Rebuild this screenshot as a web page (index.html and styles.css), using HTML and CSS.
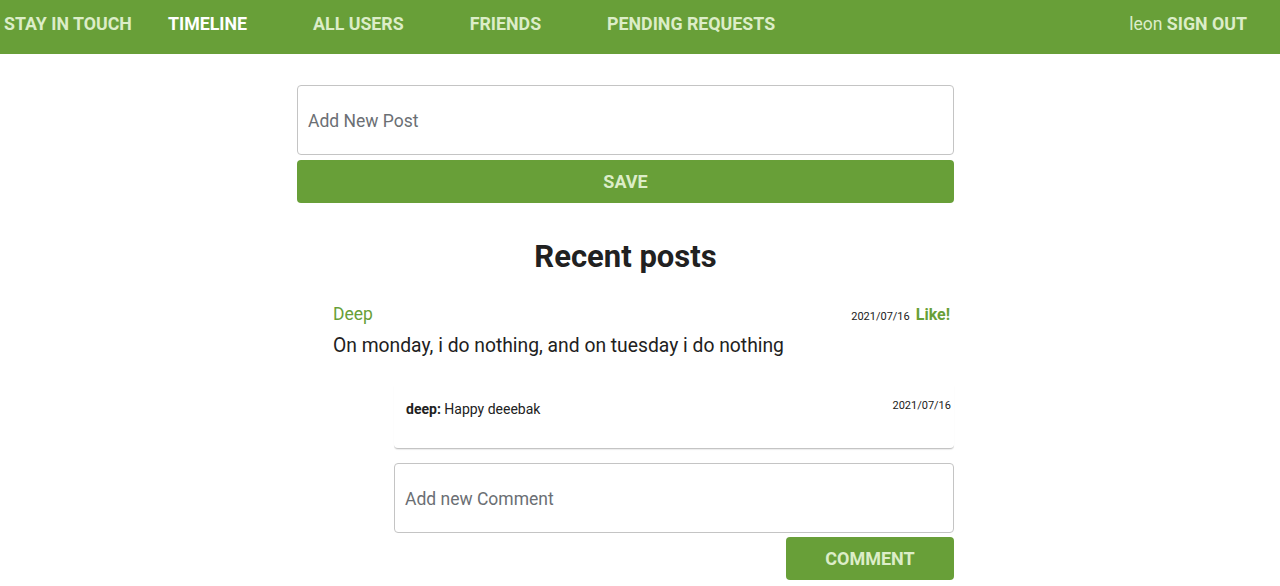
FILE: index.html
```html
<!DOCTYPE html>
<html>
<head>
<meta charset="utf-8">
<link rel="stylesheet" href="styles.css">
</head>
<body>
<nav class="nav">
  <a class="brand">STAY IN TOUCH</a>
  <a class="link active">TIMELINE</a>
  <a class="link">ALL USERS</a>
  <a class="link">FRIENDS</a>
  <a class="link">PENDING REQUESTS</a>
  <div class="user"><span class="uname">leon</span> <a class="signout">SIGN OUT</a></div>
</nav>
<main class="main">
  <div class="field post-field">Add New Post</div>
  <button class="btn save">SAVE</button>
  <h1 class="title">Recent posts</h1>
  <section class="post">
    <div class="post-head">
      <span class="author">Deep</span>
      <span class="meta"><span class="date">2021/07/16</span><a class="like">Like!</a></span>
    </div>
    <p class="body">On monday, i do nothing, and on tuesday i do nothing</p>
  </section>
  <section class="comments">
    <div class="comment">
      <span class="ctext"><b>deep:</b> Happy deeebak</span>
      <span class="cdate">2021/07/16</span>
    </div>
    <div class="field comment-field">Add new Comment</div>
    <div class="actions"><button class="btn cbtn">COMMENT</button></div>
  </section>
</main>
</body>
</html>
```
FILE: styles.css
```css
* { box-sizing: border-box; }
body {
  margin: 0;
  font-family: Roboto, "Liberation Sans", sans-serif;
  color: #212121;
  background: #fff;
}
.nav {
  height: 54px;
  background: #689f38;
  display: flex;
  align-items: flex-start;
  padding: 13px 0 0 4px;
  font-weight: 700;
  font-size: 17.8px;
  line-height: 22px;
  color: #dcedc8;
}
.brand { margin-right: 36px; }
.link { margin-right: 66px; }
.link.active { color: #fff; }
.user { margin-left: auto; margin-right: 33px; }
.uname { font-weight: 400; font-size: 17.5px; }
.main {
  width: 657px;
  margin: 31px 0 0 297px;
  display: flex;
  flex-direction: column;
}
.field {
  height: 70px;
  border: 1px solid #c4c4c4;
  border-radius: 4px;
  display: flex;
  align-items: center;
  padding: 2px 0 0 10px;
  font-size: 17.5px;
  color: #6b6f74;
}
.btn {
  border: none;
  background: #689f38;
  color: #dcedc8;
  font-family: inherit;
  font-weight: 700;
  font-size: 18px;
  height: 43px;
  border-radius: 4px;
}
.save { margin-top: 5px; }
.title {
  margin: 35px 0 0;
  text-align: center;
  font-size: 31px;
  line-height: 38px;
  font-weight: 700;
}
.post { padding: 0 4px 0 36px; margin-top: 26px; }
.post-head {
  display: flex;
  justify-content: space-between;
  align-items: baseline;
}
.author { color: #689f38; font-size: 17.5px; line-height: 24px; }
.date { font-size: 11px; margin-right: 6px; }
.like { color: #689f38; font-weight: 700; font-size: 16px; }
.body { margin: 8px 0 0; font-size: 19.3px; line-height: 24px; }
.comments { margin-left: 97px; margin-top: 27px; }
.comment {
  display: flex;
  justify-content: space-between;
  align-items: flex-start;
  padding: 12px 3px 0 12px;
  height: 64px;
  border-bottom: 1px solid #c4c4c4;
  border-radius: 0 0 4px 4px;
  box-shadow: 0 1px 1px rgba(0,0,0,0.08);
}
.ctext { font-size: 14px; line-height: 18px; margin-top: 3px; }
.cdate { font-size: 11px; line-height: 14px; margin-top: 2px; }
.comment-field { margin-top: 14px; }
.actions { display: flex; justify-content: flex-end; margin-top: 4px; }
.cbtn { width: 168px; }
```
